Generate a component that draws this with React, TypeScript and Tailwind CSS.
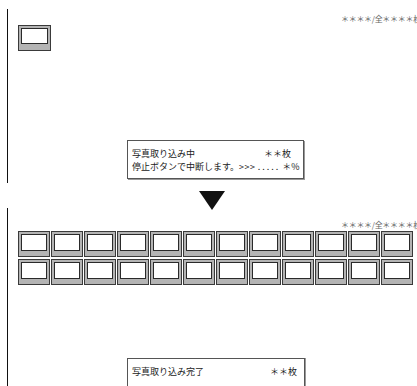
const jp = { fontFamily: '"Noto Sans CJK JP", "Noto Sans", sans-serif' }

function Thumb() {
  return (
    <div className="h-[26px] w-[32px] shrink-0 border border-[#3a3a3a] bg-[#b4b4b4] px-[2px] pb-[5px] pt-[2px]">
      <div className="h-full w-full border border-[#2a2a2a] bg-white" />
    </div>
  )
}

function Counter() {
  return (
    <div className="ml-[323px] whitespace-nowrap text-[8px] leading-[8px] tracking-[-0.3px] text-[#666]">
      ＊＊＊＊/全＊＊＊＊枚
    </div>
  )
}

export default function App() {
  return (
    <div className="h-[386px] w-[417px] overflow-hidden bg-white text-[#222]" style={jp}>
      {/* before */}
      <section className="ml-[7px] mt-[9px] flex h-[174px] flex-col border-l border-[#111] pl-[10px]">
        <div className="mt-[6px]">
          <Counter />
        </div>
        <div className="mt-[2px]">
          <div className="h-[26px] w-[33px] border border-[#3a3a3a] bg-[#b4b4b4] px-[2px] pb-[6px] pt-[2px]">
            <div className="h-full w-full border border-[#2a2a2a] bg-white" />
          </div>
        </div>
        <div className="ml-[109px] mt-auto mb-[4px] w-[177px] border border-[#555] bg-white px-[4px] pb-[5px] pt-[6px] text-[9px] leading-[13px] shadow-[1px_1px_0_#999]">
          <div className="flex whitespace-nowrap">
            <span className="w-[132px]">写真取り込み中</span>
            <span>＊＊枚</span>
          </div>
          <div className="whitespace-nowrap">
            停止ボタンで中断します。<span className="tracking-[0.5px]">&gt;&gt;&gt;</span>{" "}
            <span className="tracking-[2px]">.....</span> ＊%
          </div>
        </div>
      </section>

      <div className="flex justify-center pl-[6px] pt-[8px]">
        <svg width="26" height="19" viewBox="0 0 26 19">
          <polygon points="0,0 26,0 13,19" fill="#111" />
        </svg>
      </div>

      {/* after */}
      <section className="-mt-[2px] ml-[7px] flex h-[180px] flex-col border-l border-[#111] pl-[10px]">
        <div className="mt-[13px]">
          <Counter />
        </div>
        <div className="mt-[2px] grid grid-cols-[repeat(12,32px)] gap-x-px gap-y-[2px]">
          {Array.from({ length: 24 }).map((_, i) => (
            <Thumb key={i} />
          ))}
        </div>
        <div className="ml-[109px] mt-[73px] w-[178px] flex-1 border border-b-0 border-[#555] bg-white px-[4px] pt-[6px] text-[9px] leading-[13px] shadow-[1px_0_0_#999]">
          <div className="flex whitespace-nowrap">
            <span className="w-[138px]">写真取り込み完了</span>
            <span>＊＊枚</span>
          </div>
        </div>
      </section>
    </div>
  )
}
